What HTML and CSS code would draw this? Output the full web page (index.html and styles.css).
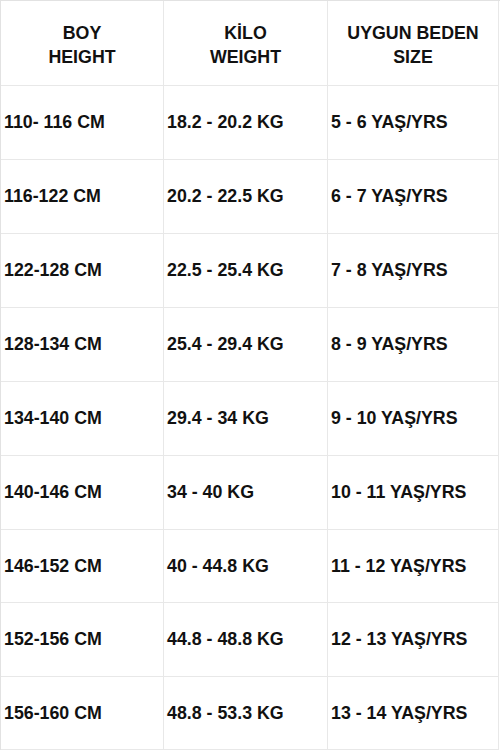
FILE: index.html
```html
<!DOCTYPE html>
<html lang="tr">
<head>
<meta charset="utf-8">
<title>Beden Tablosu</title>
<link rel="stylesheet" href="styles.css">
</head>
<body>
<div class="chart">
  <div class="cell head">BOY<br>HEIGHT</div>
  <div class="cell head">KİLO<br>WEIGHT</div>
  <div class="cell head">UYGUN BEDEN<br>SIZE</div>

  <div class="cell">110- 116 CM</div>
  <div class="cell">18.2 - 20.2 KG</div>
  <div class="cell">5 - 6 YAŞ/YRS</div>

  <div class="cell">116-122 CM</div>
  <div class="cell">20.2 - 22.5 KG</div>
  <div class="cell">6 - 7 YAŞ/YRS</div>

  <div class="cell">122-128 CM</div>
  <div class="cell">22.5 - 25.4 KG</div>
  <div class="cell">7 - 8 YAŞ/YRS</div>

  <div class="cell">128-134 CM</div>
  <div class="cell">25.4 - 29.4 KG</div>
  <div class="cell">8 - 9 YAŞ/YRS</div>

  <div class="cell">134-140 CM</div>
  <div class="cell">29.4 - 34 KG</div>
  <div class="cell">9 - 10 YAŞ/YRS</div>

  <div class="cell">140-146 CM</div>
  <div class="cell">34 - 40 KG</div>
  <div class="cell">10 - 11 YAŞ/YRS</div>

  <div class="cell">146-152 CM</div>
  <div class="cell">40 - 44.8 KG</div>
  <div class="cell">11 - 12 YAŞ/YRS</div>

  <div class="cell">152-156 CM</div>
  <div class="cell">44.8 - 48.8 KG</div>
  <div class="cell">12 - 13 YAŞ/YRS</div>

  <div class="cell">156-160 CM</div>
  <div class="cell">48.8 - 53.3 KG</div>
  <div class="cell">13 - 14 YAŞ/YRS</div>
</div>
</body>
</html>
```

FILE: styles.css
```css
html, body {
  margin: 0;
  padding: 0;
  background: #ffffff;
}

.chart {
  display: grid;
  grid-template-columns: 163px 164px 171px;
  grid-template-rows: 85px repeat(6, 74px) 73px 74px 73px;
  width: 499px;
  border-left: 1px solid #e2e2e2;
  border-top: 1px solid #e2e2e2;
  font-family: "Liberation Sans", Arial, sans-serif;
  font-weight: bold;
  font-size: 17.8px;
  color: #111111;
}

.cell {
  display: flex;
  align-items: center;
  padding-left: 3px;
  border-right: 1px solid #e8e8e8;
  border-bottom: 1px solid #e8e8e8;
  white-space: nowrap;
}

.head {
  justify-content: center;
  text-align: center;
  padding-left: 0;
  padding-top: 3px;
  line-height: 24px;
}
```
